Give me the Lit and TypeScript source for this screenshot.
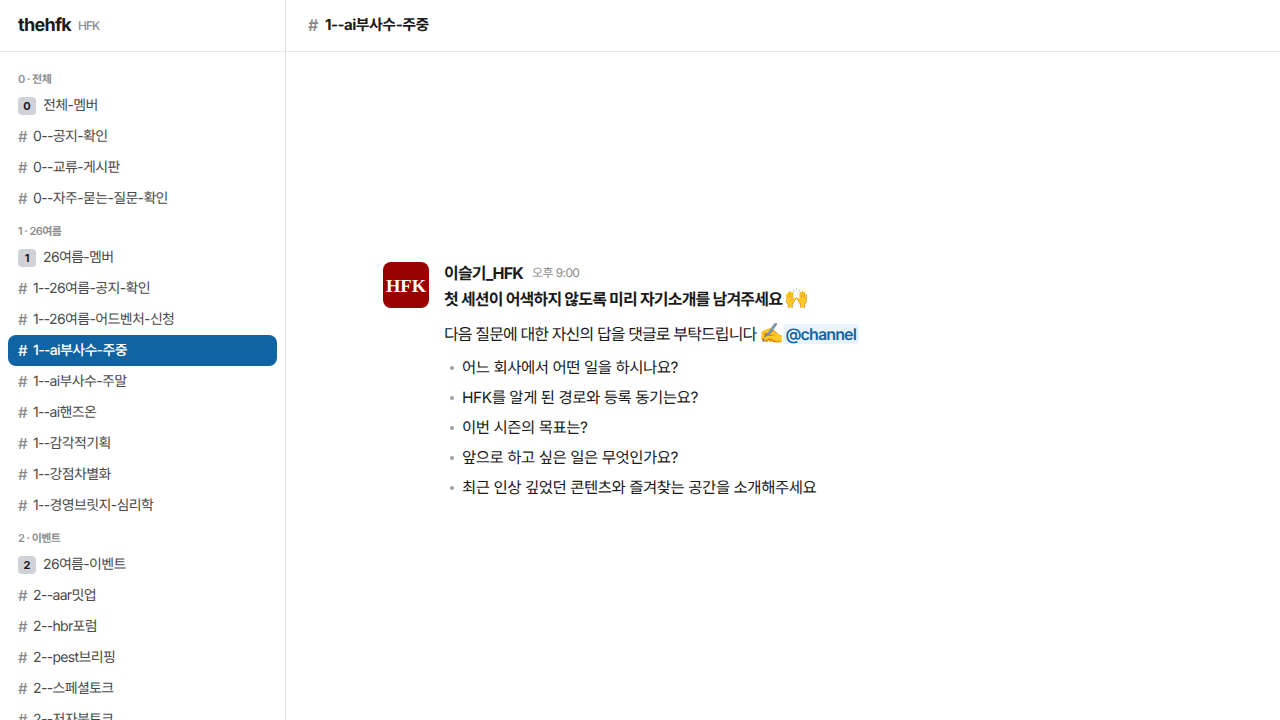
import { LitElement, html, css } from "lit";
import { customElement } from "lit/decorators.js";

const SECTIONS = [
  { label: "0 · 전체", badge: "0", badgeName: "전체-멤버", items: ["0--공지-확인", "0--교류-게시판", "0--자주-묻는-질문-확인"] },
  { label: "1 · 26여름", badge: "1", badgeName: "26여름-멤버", items: ["1--26여름-공지-확인", "1--26여름-어드벤처-신청", "1--ai부사수-주중", "1--ai부사수-주말", "1--ai핸즈온", "1--감각적기획", "1--강점차별화", "1--경영브릿지-심리학"] },
  { label: "2 · 이벤트", badge: "2", badgeName: "26여름-이벤트", items: ["2--aar밋업", "2--hbr포럼", "2--pest브리핑", "2--스페셜토크", "2--저자북토크"] },
];
const ACTIVE = "1--ai부사수-주중";
const QUESTIONS = ["어느 회사에서 어떤 일을 하시나요?", "HFK를 알게 된 경로와 등록 동기는요?", "이번 시즌의 목표는?", "앞으로 하고 싶은 일은 무엇인가요?", "최근 인상 깊었던 콘텐츠와 즐겨찾는 공간을 소개해주세요"];

@customElement("app-root")
export class AppRoot extends LitElement {
  static styles = css`
    :host { display: grid; grid-template-columns: 286px 1fr; height: 720px; overflow: hidden; font-family: Inter, "Noto Sans CJK KR", sans-serif; background: #fff; color: #1a1a1a; text-rendering: geometricPrecision; }
    .side { border-right: 1px solid #e3e3e3; display: flex; flex-direction: column; min-height: 0; overflow: hidden; }
    .brand { height: 51px; flex: none; border-bottom: 1px solid #e8e8e8; display: flex; align-items: center; gap: 7px; padding-left: 18px; }
    .brand b { font-size: 18px; font-weight: 700; letter-spacing: -0.72px; color: #1a1a1a; }
    .brand span { font-size: 12px; font-weight: 500; letter-spacing: -1px; color: #8a8a8a; }
    nav { padding: 18px 8px 0; flex: none; }
    .label { height: 16px; line-height: 18px; margin: 8px 0 4px; padding-left: 10px; font-size: 11px; font-weight: 600; letter-spacing: -0.55px; color: #8e8e8e; }
    .label.first { margin-top: 0; }
    .item { box-sizing: border-box; height: 31px; display: flex; align-items: center; padding: 0 0 1px 10px; border-radius: 8px; font-size: 14px; letter-spacing: -0.66px; color: #4a4a4a; white-space: nowrap; }
    .hash { width: 15px; flex: none; font-size: 15px; color: #8a8a8a; font-weight: 500; letter-spacing: 0; }
    .item.active { background: #1164a3; color: #fff; font-weight: 500; }
    .item.active .hash { color: #fff; }
    .badge { width: 18px; height: 18px; flex: none; margin: 1px 7px 0 0; border-radius: 4px; background: #cfd3d9; color: #1a1a1a; font-size: 11px; font-weight: 700; display: flex; align-items: center; justify-content: center; letter-spacing: 0; }
    main { display: flex; flex-direction: column; min-width: 0; }
    header { box-sizing: border-box; height: 52px; flex: none; border-bottom: 1px solid #e8e8e8; display: flex; align-items: center; padding: 0 0 2px 22px; font-size: 15px; font-weight: 700; letter-spacing: -0.5px; color: #1a1a1a; }
    header .hash { width: 17px; font-size: 16px; font-weight: 600; }
    .msg { display: flex; gap: 15px; margin: 210px 0 0 97px; }
    .avatar { box-sizing: border-box; padding-top: 4px; width: 46px; height: 46px; flex: none; border-radius: 8px; background: #990000; color: #fff; font-family: "Liberation Serif", serif; font-weight: 700; font-size: 18.5px; display: flex; align-items: center; justify-content: center; }
    .body { display: flex; flex-direction: column; font-size: 15.5px; letter-spacing: -0.47px; color: #1a1a1a; }
    .meta { height: 20px; display: flex; align-items: center; gap: 9px; }
    .meta b { font-size: 16px; font-weight: 700; letter-spacing: -0.8px; }
    .meta span { font-size: 12px; color: #8a8a8a; letter-spacing: -0.6px; }
    .title { height: 24px; line-height: 24px; margin-top: 5px; font-weight: 700; font-size: 16px; letter-spacing: -0.8px; white-space: nowrap; }
    .title .emoji { margin-left: -1px; }
    .intro { height: 24px; line-height: 24px; margin-top: 11px; font-size: 16px; letter-spacing: -0.88px; white-space: nowrap; }
    .intro .emoji { margin-left: -1px; }
    .mention { background: #e8f3fb; color: #1164a3; border-radius: 3px; font-weight: 600; padding: 0 3px; margin-left: -5px; }
    ul { list-style: none; margin: 7px 0 0; padding: 0; }
    li { box-sizing: border-box; height: 30px; display: flex; align-items: center; padding-bottom: 3px; white-space: nowrap; }
    li i { width: 4px; height: 4px; border-radius: 50%; background: #a0a0a0; margin: 3px 8px 0 6px; flex: none; }
    .emoji { font-family: "Noto Color Emoji", sans-serif; font-size: 20px; letter-spacing: 0; font-weight: 400; line-height: 1; }
  `;

  render() {
    return html`
      <aside class="side">
        <div class="brand"><b>thehfk</b><span>HFK</span></div>
        <nav>
          ${SECTIONS.map((s, i) => html`
            <div class="label ${i === 0 ? "first" : ""}">${s.label}</div>
            <div class="item"><span class="badge">${s.badge}</span>${s.badgeName}</div>
            ${s.items.map((n) => html`<div class="item ${n === ACTIVE ? "active" : ""}"><span class="hash">#</span>${n}</div>`)}
          `)}
        </nav>
      </aside>
      <main>
        <header><span class="hash">#</span>1--ai부사수-주중</header>
        <div class="msg">
          <div class="avatar">HFK</div>
          <div class="body">
            <div class="meta"><b>이슬기_HFK</b><span>오후 9:00</span></div>
            <div class="title">첫 세션이 어색하지 않도록 미리 자기소개를 남겨주세요 <span class="emoji">🙌</span></div>
            <div class="intro">다음 질문에 대한 자신의 답을 댓글로 부탁드립니다 <span class="emoji">✍️</span> <span class="mention">@channel</span></div>
            <ul>${QUESTIONS.map((q) => html`<li><i></i>${q}</li>`)}</ul>
          </div>
        </div>
      </main>
    `;
  }
}
